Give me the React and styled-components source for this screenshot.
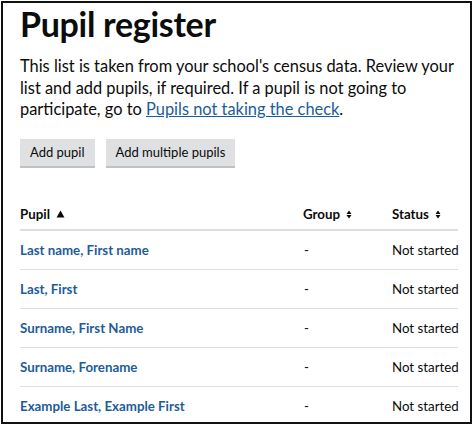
import React from "react";
import styled, { createGlobalStyle } from "styled-components";

const Global = createGlobalStyle`
    body {
        margin: 0;
        background: #fff;
        font-family: Lato, "Liberation Sans", Arial, sans-serif;
        color: #0b0c0c;
    }
`;

const Frame = styled.div`
    box-sizing: border-box;
    width: 471px;
    height: 423px;
    margin: 1px 0 0 1px;
    border: 2px solid #111;
    padding: 0 10px 0 17px;
    overflow: hidden;
`;

const Title = styled.h1`
    margin: 0;
    padding-top: 1px;
    font-size: 34px;
    line-height: 40px;
    font-weight: 700;
    letter-spacing: -0.3px;
`;

const Lead = styled.p`
    margin: 11px 0 0;
    font-size: 16.4px;
    line-height: 21.5px;
    white-space: nowrap;
    & a {
        color: #1d5c9c;
        text-decoration: underline;
    }
`;

const Actions = styled.div`
    display: flex;
    gap: 11px;
    margin-top: 19px;
`;

const Button = styled.button`
    font-family: inherit;
    font-size: 13px;
    color: #0b0c0c;
    background: #dee0e2;
    border: none;
    box-shadow: 0 2px 0 #bfc1c3;
    height: 27px;
    padding: 0 10px;
`;

const Table = styled.div`
    margin-top: 30px;
    width: 438px;
`;

const Row = styled.div`
    display: grid;
    grid-template-columns: 283px 89px 1fr;
    align-items: center;
    box-sizing: border-box;
    height: ${(p) => (p.head ? "35px" : "39px")};
    padding-top: ${(p) => (p.head ? "4px" : "0")};
    border-bottom: ${(p) => (p.head ? "2px solid #dedede" : "1px solid #dedede")};
    font-size: 13.3px;
    white-space: nowrap;
    &:last-child {
        border-bottom: none;
    }
`;

const HeadCell = styled.span`
    font-weight: 700;
    display: flex;
    align-items: center;
    gap: 6px;
`;

const NameLink = styled.a`
    font-weight: 700;
    color: #1d5c9c;
    text-decoration: none;
`;

const Cell = styled.span`
    padding-left: ${(p) => p.pad || 0}px;
`;

function SortIcon({ active }) {
    if (active) {
        return (
            <svg width="9" height="8" viewBox="0 0 9 8">
                <path d="M4.5 0.5 L8.5 7.5 L0.5 7.5 Z" fill="#0b0c0c" />
            </svg>
        );
    }
    return (
        <svg width="6" height="9" viewBox="0 0 6 9">
            <path d="M3 0.5 L5.5 4 L0.5 4 Z M0.5 5 L5.5 5 L3 8.5 Z" fill="#0b0c0c" />
        </svg>
    );
}

const pupils = [
    "Last name, First name",
    "Last, First",
    "Surname, First Name",
    "Surname, Forename",
    "Example Last, Example First",
];

export default function App() {
    return (
        <>
            <Global />
            <Frame>
                <Title>Pupil register</Title>
                <Lead>
                    This list is taken from your school's census data. Review your
                    <br />
                    list and add pupils, if required. If a pupil is not going to
                    <br />
                    participate, go to <a href="#">Pupils not taking the check</a>.
                </Lead>
                <Actions>
                    <Button>Add pupil</Button>
                    <Button>Add multiple pupils</Button>
                </Actions>
                <Table>
                    <Row head>
                        <HeadCell>
                            Pupil <SortIcon active />
                        </HeadCell>
                        <HeadCell>
                            Group <SortIcon />
                        </HeadCell>
                        <HeadCell>
                            Status <SortIcon />
                        </HeadCell>
                    </Row>
                    {pupils.map((name) => (
                        <Row key={name}>
                            <NameLink href="#">{name}</NameLink>
                            <Cell pad={1}>-</Cell>
                            <Cell>Not started</Cell>
                        </Row>
                    ))}
                </Table>
            </Frame>
        </>
    );
}
